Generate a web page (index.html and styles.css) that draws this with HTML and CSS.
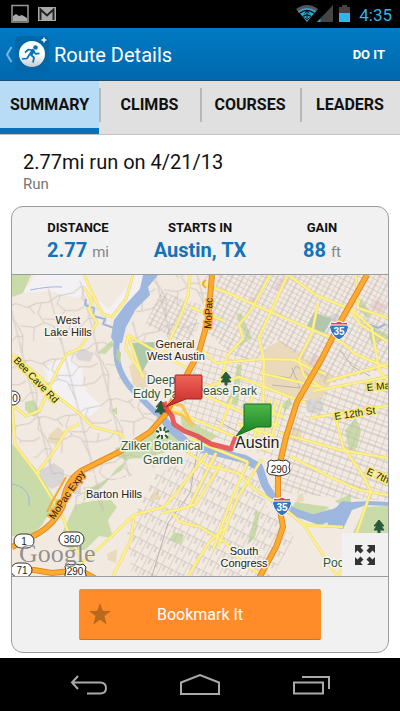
FILE: index.html
```html
<!doctype html>
<html lang="en">
	<head>
		<title>Route Details</title>
		<meta charset="utf-8"/>
		<meta name="viewport" content="width=device-width, initial-scale=1">
		<link rel="stylesheet" href="styles.css">
	</head>
	<body>

		<div class="statusbar">
			<svg width="60" height="28" viewBox="0 0 60 28" aria-hidden="true">
				<path d="M12 5.500h16v16.500H12z" fill="none" stroke="#999" stroke-width="1.500"/>
				<path d="M13 20v-4l3-2 3 2 3-1 5 3v3H13z" fill="#aaa"/>
				<path d="M38 7h18v14H38z" fill="#aaa"/>
				<path d="M40.500 20V9.500L47 15.500l6.500-6V20" fill="none" stroke="#222" stroke-width="2"/>
			</svg>
			<div class="status-right">
				<svg width="56" height="28" viewBox="0 0 56 28" aria-hidden="true">
					<path d="M1 9q11-8 22 0l-3 4q-8-6-16 0z" fill="#555"/>
					<path d="M3 11q9-6 18 0l-9 11z" fill="#33a4cc"/>
					<path d="M5 13q7-5 14 0M8 16.500q4-3 8 0" fill="none" stroke="#111" stroke-width="1.500"/>
					<path d="M12 11v9M9.500 13.500L12 11l2.500 2.500M9.500 17.500L12 20l2.500-2.500" fill="none" stroke="#123" stroke-width="1"/>
					<path d="M38 5v17H22z" fill="#444"/>
					<path d="M25.500 18.500V22H22z" fill="#33a4cc"/>
					<path d="M44 7h3V5h5v2h3v6H44z" fill="#444"/>
					<path d="M44 13h11v9H44z" fill="#33b5e5"/>
				</svg>
				<span>4:35</span>
			</div>
		</div>

		<header class="actionbar">
			<button class="up" aria-label="Back">
				<svg width="46" height="40" viewBox="0 0 46 40" aria-hidden="true">
					<defs>
						<linearGradient id="disc" x2="0" y2="1">
							<stop offset=".5" stop-color="#fff"/>
							<stop offset="1" stop-color="#c5cbd0"/>
						</linearGradient>
					</defs>
					<path d="M7.500 13L3 20.500 7.500 28" fill="none" stroke="#77b6df" stroke-width="2"/>
					<rect x="11" y="2" width="34" height="36" rx="5" fill="#0068a8"/>
					<circle cx="28" cy="20" r="13" fill="url(#disc)"/>
					<circle cx="31.500" cy="13.500" r="2.300" fill="#0871b9"/>
					<path d="M28.500 14.500l2.500 2.500-3 5-3.500-1.500z" fill="#0871b9"/>
					<path d="M21 18.500l3.500-3 4.500.8 2.500 3.500 4-.5M27 21l3 2.500-1 5M25.500 20.500l-2.500 4-5 .5" fill="none" stroke="#0871b9" stroke-width="1.700" stroke-linejoin="round"/>
					<path d="M40 3.500v5M37.500 6h5" stroke="#fff" stroke-width="1.500"/>
				</svg>
			</button>
			<h1>Route Details</h1>
			<button class="do-it">DO IT</button>
		</header>

		<nav class="tabs">
			<button class="tab selected" aria-current="page">SUMMARY</button>
			<button class="tab">CLIMBS</button>
			<button class="tab">COURSES</button>
			<button class="tab">LEADERS</button>
		</nav>

		<main>
			<div class="route-title">
				<h2>2.77mi run on 4/21/13</h2>
				<p>Run</p>
			</div>

			<section class="card">
				<dl class="stats">
					<div><dt>DISTANCE</dt><dd>2.77 <small>mi</small></dd></div>
					<div><dt>STARTS IN</dt><dd>Austin, TX</dd></div>
					<div><dt>GAIN</dt><dd>88 <small>ft</small></dd></div>
				</dl>

				<div class="map">
					<svg class="map-art" viewBox="12 275 376 301" preserveAspectRatio="xMidYMid slice" role="img" aria-label="Map of the route in Austin">
						<defs>
							<pattern id="grid-north" width="10" height="5" patternUnits="userSpaceOnUse" patternTransform="rotate(28)">
								<path d="M0 0h10M0 0v5M5 0v5"/>
							</pattern>
							<pattern id="grid-town" width="7" height="6" patternUnits="userSpaceOnUse" patternTransform="rotate(17)">
								<path d="M0 0h7M0 0v6"/>
							</pattern>
							<pattern id="grid-east" width="7" height="11" patternUnits="userSpaceOnUse" patternTransform="rotate(20)">
								<path d="M0 0h7M0 0v11M0 5h7"/>
							</pattern>
							<pattern id="grid-south" width="8" height="13" patternUnits="userSpaceOnUse" patternTransform="rotate(27)">
								<path d="M0 0h8M0 0v13M4 0v6"/>
							</pattern>
							<pattern id="lanes" width="74" height="58" patternUnits="userSpaceOnUse" patternTransform="rotate(-14)">
								<path d="M0 12l8-4 9 1 9 6 10-2 12 2 10-4 16 1M12 8l-5 11 5 9 3 13-5 17M41 14l-6 9 4 11 8 5 4 19M10 58V0M51 58V0M15 31l13 5 11-2M39 30l14 4 9-7 12 3M0 30l7-2M28 15l4 8M61 11l-5 8 6 8M0 46l9-6 5 2M47 42l13 4 14 0M28 36l-4 13M62 46l3-8"/>
							</pattern>
							<linearGradient id="pin-red" x2="0" y2="1">
								<stop stop-color="#ef6357"/><stop offset="1" stop-color="#c82a2a"/>
							</linearGradient>
							<linearGradient id="pin-green" x2="0" y2="1">
								<stop stop-color="#4fb64a"/><stop offset="1" stop-color="#148023"/>
							</linearGradient>
						</defs>

						<rect x="12" y="275" width="376" height="301" fill="#f2e9e1"/>

						<!-- land use -->
						<path d="M35 275h50l10 22 14 12 18-22 3-12h14l-15 38-14 7-12-3-12-22-16 3-24-7-38 3 15-8zM44 368l24-14 14 14 4 24 16 14-12 10-18-4-22-26z" fill="#f4f1f4"/>
						<path d="M40 470l14-7 10 7v13l-12 6-12-7zM75 354l8-5 11 4-4 9-12-2zM326 317l12-4 6 14-14-5zM305 400l16-3 3 14-16 2zM74 484h7v10h-7z" fill="#d9d6d5"/>
						<path d="M281 277l9 3-9 13-8-4zM252 297l7 1-3 8-10-2zM376 299l10 6-6 9-10-6zM314 353l6 6-4 10-7-8z" fill="#ecd3d0"/>
						<g fill="#ead9bb">
							<path d="M264 350l16-10 31 22 22 14-10 22-19 1-38-8zM129 366l9-5 14 18-8 15-11-10zM49 435l9-8 7 6-8 12-9-3zM350 442l7 3-3 10-7-2zM107 554l10-5-1 14-8-3zM150 496l8-6 2 9-8 2zM293 427l10 3-4 12-9-4zM298 495l5-2 1 8-8 2z"/>
						</g>
						<g fill="#c9dba9">
							<path d="M12 275h19l-8 18-11 4zM12 444l23 24 18 27 7 8-13 14q-14 25-35 19z"/>
							<path d="M57 541l8-14 10-22 8-2 2-12 9-5 15-8 13-8 4-10-8-3-3-9 12-3 28-14 14 8-5 14-18 4-17 2-13 10-10 14-16 12-8 8 11-2 18-1 6 7-9 13 5 18-14-2-14 14h-15l-8-9z"/>
							<path d="M25 402l8-2 8 12-7 5-9-7zM103 348l8-7 4 3-10 10-8-1zM111 410l6-3v8zM226 403l7-14 4-25 5 1-4 40zM229 356l7-12 10-7-10-22 5-2 11 25-16 10zM236 335l7-12M283 403l7-5 2 6-8 9zM345 430l11-12 5 13-4 17-8 2zM295 502l34 5-10 10-27-9zM335 501l16-7v10l-9 2zM353 533l12-26 23-1v70h-35zM174 532l10 3-3 9-12-4zM247 545l9-34 4 2-5 25zM368 327l9 2 11 5v5l-17 5zM361 299l10 13-4 7-9-12zM161 428l22 7 16 14-20 2-14-8zM180 412l18 14 20 10-12 8-24-16z"/>
						</g>
						<path d="M130 343l27-1-8 18-8 14zM307 326l7-14 18 7-8 14z" fill="#aecaab"/>

						<!-- residential streets -->
						<g class="lanes">
							<path fill="url(#lanes)" d="M12 298l68-18 22 35 12 4 2 55 22 22 22 22-2 8-86 64-36-30-24-25zM72 500l8-10 42-42 38-15-6 38-40 9-12 35-22 6zM148 275h63l-14 56-40 20-30-12z"/>
						</g>
						<g class="streets">
							<path fill="url(#grid-north)" d="M218 275h170v92l-62 18-18-22-32-24-20 22-24-6-24-22zM145 325l16-34 40 14-10 42-40-20z"/>
							<path fill="url(#grid-town)" d="M168 395l20-22 12-30 64 20v30l50 6-36 60-46-13-45-25z"/>
							<path fill="url(#grid-east)" d="M325 392l63-18v127l-58-4-58-6 16-58z"/>
							<path fill="url(#grid-south)" d="M155 475l48-24 50 13 16 48 26 26-23 38H132l-5-48z"/>
							<path d="M270 375l20 3 6-12 12 8 2 12M272 385l28 3-8-20M340 350l12 16 18 10M216 420l26 14M198 447l-8 46-22 30-16 53"/>
						</g>

						<!-- creeks and river -->
						<g fill="none" stroke="#9db7de" stroke-linejoin="round">
							<path d="M114 328l-11-4 2-5-12-3 1-8-9-3 1-6" stroke-width="2"/>
							<path d="M12 484q14 2 17 14v8M30 290q20-4 32-3" stroke-width="1"/>
							<path d="M360 319l8 5 10 4 8-4M374 338v-9" stroke-width="2"/>
							<path d="M117 340q-4 27 14 48l26 26" stroke-width="6"/>
							<path d="M157 410l13 18 15 13 18 8 42 10 14 8 6 18 10 16 19 11 26 9 20-8" stroke-width="8"/>
							<path d="M313 519l22-6 12-6" stroke-width="9"/>
						</g>
						<path d="M143 275h15l-10 12 2 8-14 14-10 18-4 16h-8l-3-6 3-17 12-16 14-15z" fill="#9db7de"/>
						<path d="M335 509l7-8 10 1 16-1 20 1v4l-22-1-14 5-9 19-14-2-3-8zM310 519l20-10v8l-12 6z" fill="#9db7de"/>
						<path d="M117 348l4 5-1 11-4-7z" fill="#bad09a"/>

						<!-- arterials: casing first, then fill -->
						<g class="roads">
							<g id="arterials">
								<path d="M84 275l9 20 5 10 5 9 9 3 14-18 7-24M84 287l8 14-3 8 8 14-18 26-12 5-8 13-10 21"/>
								<path d="M12 354l29 24 12 15 28 22 12 12 28 7 5 10 12 4 14-2M12 405l14 11 13-5 8-17"/>
								<path d="M12 405l3 40 22 29 25 41 8 22 9 18 8 20M36 474l16-20 15-24 12-6M72 572l26-23 36-34 30-8 15-17 28-37"/>
								<path d="M200 283l28 10 45 20 70 30 12 11 33 14M288 275l28 20 36 15 20 18 7 42 9 11"/>
								<path d="M270 275l-19 35-12 15 4 14-8 8-8 9-4 17-7 20M287 277l-28 60 5 24-1 43-12 45M318 303l-6 30-13 26 5 17 22 14"/>
								<path d="M200 348l16 15 48-4 30 1 15 8 17 6M260 373l60 14M327 381l61-17M313 391l75-14M310 418l78-12"/>
								<path d="M178 399l34-14 27-8 67 26M168 407l39 18 40 17 22 9M197 392l76 34"/>
								<path d="M232 398l-12 30M216 453l-14 28-14 28M262 459l-24 38-20 50"/>
								<path d="M280 433l60 17 48 8M290 456l38 20 31 14 29 5M335 415l8 32 18 25 10 19-17 50-18 40"/>
								<path d="M388 318l-30-10-2-33M350 310l10 14 28 18"/>
								<path d="M128 335l15 43M128 335l22 13 40 22M128 335l-2 14 18 28M190 275l-2 20-6 18-12 27-10 22M190 307l34 14"/>
								<path d="M178 445l28 20 32 8 15 15 33 22 18 15 19 30 14 21M188 438l60 24M303 525l40 2M221 464l-25 40-15 5-20 4M134 515l-3 25-18 36M172 513l8 9 20 5 25 15 18 22 22 12"/>
								<path d="M248 462l-17 38-18 50M188 576l22-35 15-13"/>
								<path d="M276 401l-13 42M270 399l-13 42M282 403l-13 42M253 395l-14 42M246 405l38 12M242 414l38 12M237 424l38 12"/>
							</g>
							<use class="road-fill" href="#arterials"/>
						</g>

						<!-- highways -->
						<g class="highways">
							<g id="highways">
								<path d="M212 275l-4 45-9 32-16 30-18 33-15 17-31 20-38 19q-17 12-18 35-8 17-24 27l-27 14"/>
								<path d="M367 275l-24 42-22 43-24 42-11 35-8 35v27l5 28-7 20-17 31"/>
								<path d="M12 570h22l18 3 28-3 16 9"/>
							</g>
							<use class="highway-fill" href="#highways"/>
							<path d="M66 477l-13 23-6 12" stroke="#fba92c" stroke-width="2"/>
							<path d="M169 404l13 1 10 20-10-10-14-4" stroke="#f8c552" stroke-width="3"/>
							<path d="M206 280q-6 4 0 8M210 280q6 4 0 8" stroke="#fba92c" stroke-width="2"/>
						</g>

						<g class="road-labels">
							<text transform="translate(211 329) rotate(-87)">MoPac</text>
							<text transform="translate(13 361) rotate(46)">Bee Cave Rd</text>
							<text transform="translate(54 520) rotate(-56)">MoPac Expy</text>
							<text transform="translate(335 420) rotate(-9)">E 12th St</text>
							<text transform="translate(367 391) rotate(-6)">E Ma</text>
							<text transform="translate(366 474) rotate(24)">E 7th</text>
						</g>

						<g class="places">
							<text x="68" y="324">West</text>
							<text x="68" y="336">Lake Hills</text>
							<text x="175" y="348">General</text>
							<text x="176" y="360">West Austin</text>
							<text x="114" y="498">Barton Hills</text>
							<text x="244" y="555">South</text>
							<text x="244" y="567">Congress</text>
						</g>
						<g class="places parks">
							<text x="161" y="384">Deep</text>
							<text x="133" y="398" text-anchor="start">Eddy Park</text>
							<text x="257" y="395" text-anchor="end">Pease Park</text>
							<text x="162" y="450">Zilker Botanical</text>
							<text x="163" y="464">Garden</text>
							<text x="323" y="567" text-anchor="start">Poc</text>
						</g>
						<path d="M226 372l5 6h-3l3 4h-4v3h-2v-3h-4l3-4h-3zM161 401l5 6h-3l3 5h-4v2h-2v-2h-5l4-5h-3zM379 520l5 6h-3l3 4h-4v3h-2v-3h-4l3-4h-3z" fill="#285b3c" stroke="#285b3c" stroke-width="1"/>
						<circle cx="162" cy="433" r="6" fill="#f8f4ee"/>
						<path d="M160 427l1 4M165 427l-1 4M156 431l3 1M169 431l-4 1M157 438l3-3M168 438l-3-3M162 435v4" fill="none" stroke="#285b3c" stroke-width="2"/>

						<!-- route -->
						<path d="M164 402l3 8 5 6 2 8 10 7 13 5 14 8 20 5 5-12" fill="none" stroke="#e43b3f" stroke-opacity=".8" stroke-width="5" stroke-linejoin="round"/>
						<text class="city" x="235" y="448">Austin</text>
						<path d="M176 375h25q1 0 1 1v22q0 1-1 1h-15l-20 8 9-9v-22q0-1 1-1z" fill="url(#pin-red)" stroke="#9d2525" stroke-width="1"/>
						<path d="M245 404h25q1 0 1 1v21q0 1-1 1h-13l-21 9 8-10v-21q0-1 1-1z" fill="url(#pin-green)" stroke="#176d22" stroke-width="1"/>

						<!-- highway shields -->
						<g class="shields">
							<circle cx="13" cy="398" r="7"/>
							<rect x="14" y="534" width="20" height="14" rx="7"/>
							<rect x="59" y="532" width="25" height="14" rx="7"/>
							<rect x="11" y="563" width="21" height="14" rx="7"/>
							<path d="M268 462l3-2 3 1 5-1 4 1 3-1 4 3q-2 4 0 8-2 4-6 4l-5 1-5-1q-7 0-7-5 2-4 1-8z"/>
							<path d="M65 566l3-2 3 1 5-1 4 1 3-1 3 3q-2 4 0 8v5H65v-5q2-4 0-9z"/>
							<text x="15" y="402">0</text>
							<text x="24" y="545">1</text>
							<text x="72" y="543">360</text>
							<text x="22" y="574">71</text>
							<text x="279" y="473">290</text>
							<text x="75" y="575">290</text>
						</g>
						<g class="interstate">
							<path d="M331 322q4 2 8-1 4 3 8 1 3 6 0 10-3 6-8 8-5-2-8-8-3-4 0-10z" fill="#3776bf"/>
							<path d="M331 322q4 2 8-1 4 3 8 1l1 3h-18z" fill="#d84848"/>
							<path d="M274 498q4 2 8-1 4 3 8 1 3 6 0 10-3 6-8 8-5-2-8-8-3-4 0-10z" fill="#3776bf"/>
							<path d="M274 498q4 2 8-1 4 3 8 1l1 3h-18z" fill="#d84848"/>
							<text x="339" y="335">35</text>
							<text x="282" y="511">35</text>
						</g>
						<text class="google" x="19" y="562">Google</text>
					</svg>
					<button class="expand" aria-label="Expand map">
						<svg width="22" height="22" viewBox="0 0 22 22" aria-hidden="true">
							<path d="M1 1h8L6.500 3.500l3 3-3 3-3-3L1 9zM21 1v8l-2.500-2.500-3 3-3-3 3-3L13 1zM1 21v-8l2.500 2.500 3-3 3 3-3 3L9 21zM21 21h-8l2.500-2.500-3-3 3-3 3 3L21 13z"/>
						</svg>
					</button>
				</div>

				<div class="card-footer">
					<button class="bookmark">
						<svg width="22" height="22" viewBox="0 0 22 22" aria-hidden="true">
							<path d="M11 0l2.800 7.800 8.200.2-6.500 5 2.300 8.500L11 16.800 4.200 21.500 6.500 13 0 8l8.200-.2z" fill="#b9691f"/>
						</svg>
						<span>Bookmark It</span>
					</button>
				</div>
			</section>
		</main>

		<footer class="navbar">
			<button aria-label="Back">
				<svg width="40" height="24" viewBox="0 0 40 24"><path d="M9 3L3 9.500l6 6.500M3 9.500h28q6 0 6 5.500t-6 5.500H18"/></svg>
			</button>
			<button aria-label="Home">
				<svg width="42" height="24" viewBox="0 0 42 24"><path d="M2 21V9.500L21 2l19 7.500V21z"/></svg>
			</button>
			<button aria-label="Recent apps">
				<svg width="40" height="24" viewBox="0 0 40 24"><path d="M3 9.500h29v11H3zM11 4h27v12"/></svg>
			</button>
		</footer>

	</body>
</html>
```
FILE: styles.css
```css
* {
	box-sizing: border-box;
}

body {
	margin: 0;
	min-height: 100vh;
	display: flex;
	flex-direction: column;
	background: #fff;
	color: #111;
	font-family: Roboto, "Liberation Sans", sans-serif;
}

h1, h2, p, dl, dd {
	margin: 0;
	font-weight: normal;
}

button {
	margin: 0;
	padding: 0;
	border: 0;
	background: none;
	font: inherit;
	color: inherit;
	cursor: pointer;
}

svg {
	display: block;
}

/* system status bar */
.statusbar {
	height: 28px;
	display: flex;
	justify-content: space-between;
	background: #000;
}

.status-right {
	display: flex;
	gap: 8px;
	padding-right: 8px;
	color: #33b5e5;
	font-size: 17px;
	line-height: 30px;
}

/* title bar */
.actionbar {
	height: 53px;
	display: flex;
	align-items: center;
	background: linear-gradient(#007ac3, #0068ae);
	border-bottom: 1px solid #1c4e70;
	color: #fff;
}

.actionbar h1 {
	flex: 1;
	margin-left: 4px;
	font-size: 20px;
	line-height: 24px;
	padding-top: 2px;
}

.up {
	margin-left: 4px;
}

.do-it {
	padding: 8px 15px;
	font-size: 13px;
	font-weight: bold;
}

.tabs {
	height: 54px;
	display: grid;
	grid-template-columns: 99fr 101fr 100fr 100fr;
	background: #e0e0e0;
	border-bottom: 1px solid #c4c4c4;
}

.tab {
	display: flex;
	align-items: center;
	justify-content: center;
	border-bottom: 6px solid transparent;
	font-size: 16px;
	font-weight: bold;
}

.tab + .tab::before {
	content: "";
	width: 2px;
	height: 34px;
	margin-right: auto;
	background: #b8b8b8;
}

.tab + .tab::after {
	content: "";
	width: 2px;
	margin-left: auto;
}

.tab.selected {
	background: #b8dcf5;
	border-color: #0871bb;
}

main {
	flex: 1;
	display: flex;
	flex-direction: column;
	padding: 15px 11px 5px;
}

.route-title {
	padding: 0 12px 11px;
}

.route-title h2 {
	font-size: 20px;
	line-height: 24px;
}

.route-title p {
	color: #777;
	font-size: 15px;
	line-height: 21px;
}

.card {
	flex: 1;
	display: flex;
	flex-direction: column;
	border: 1px solid #999da0;
	border-radius: 12px;
	background: #f1f1f1;
	overflow: hidden;
}

.stats {
	display: grid;
	grid-template-columns: 132px 1fr 132px;
	padding: 12px 0 8px;
	border-bottom: 1px solid #999da0;
	text-align: center;
}

.stats dt {
	font-size: 13px;
	font-weight: bold;
	line-height: 17px;
}

.stats dd {
	color: #1373ba;
	font-size: 20px;
	font-weight: bold;
	line-height: 28px;
}

.stats small {
	color: #858585;
	font-size: 15px;
	font-weight: normal;
}

/* map */
.map {
	position: relative;
	flex: 1;
	min-height: 301px;
}

.map-art {
	width: 100%;
	height: 100%;
	font-family: "Liberation Sans", Arial, sans-serif;
}

pattern path {
	fill: none;
	stroke: #c2bbb6;
	stroke-width: 1;
}

.streets path:last-child {
	fill: none;
	stroke: #bdb3aa;
}

.lanes {
	opacity: .7;
}

.roads,
.highways {
	fill: none;
	stroke-linejoin: round;
}

.roads {
	stroke: #e8d689;
	stroke-width: 3;
}

.road-fill {
	stroke: #fdf283;
	stroke-width: 2;
}

.highways {
	stroke: #df8d24;
	stroke-width: 6;
}

.highway-fill {
	stroke: #fdaa30;
	stroke-width: 4;
}

.places,
.road-labels,
.city {
	paint-order: stroke;
	stroke: #f8f4ee;
	stroke-width: 3px;
	stroke-linejoin: round;
	fill: #222;
}

.places {
	font-size: 11px;
	text-anchor: middle;
}

.parks {
	fill: #2e5a3a;
	font-size: 12px;
}

.road-labels {
	font-size: 10px;
	stroke: #f9ea70;
}

.road-labels text:nth-child(1),
.road-labels text:nth-child(3) {
	stroke: #fdaa30;
}

.city {
	font-size: 16px;
}

.shields {
	fill: #fff;
	stroke: #333;
	stroke-width: 1;
}

.shields text,
.interstate text {
	font-size: 10px;
	text-anchor: middle;
	fill: #222;
	stroke: none;
}

.interstate path {
	stroke: #fff;
	stroke-width: 1;
}

.interstate text {
	fill: #fff;
	font-weight: bold;
}

.google {
	font-family: "Liberation Serif", serif;
	font-size: 26px;
	fill: #777;
	fill-opacity: .8;
	paint-order: stroke;
	stroke: #fff;
	stroke-opacity: .4;
	stroke-width: 1px;
}

.expand {
	position: absolute;
	right: 0;
	bottom: 0;
	width: 46px;
	height: 43px;
	display: grid;
	place-items: center;
	background: #f1f1f1;
	fill: #333;
}

.card-footer {
	display: flex;
	justify-content: center;
	padding: 12px;
	border-top: 1px solid #999da0;
}

.bookmark {
	width: 242px;
	height: 51px;
	display: grid;
	grid-template-columns: 22px 1fr 22px;
	align-items: center;
	padding: 0 10px;
	border-bottom: 1px solid #cf7224;
	border-radius: 2px;
	background: #ff8c28;
	color: #fff;
	font-size: 16px;
}

.navbar {
	height: 53px;
	display: flex;
	justify-content: center;
	gap: 70px;
	background: #000;
}

.navbar path {
	fill: none;
	stroke: #aaa;
	stroke-width: 2;
}
```
